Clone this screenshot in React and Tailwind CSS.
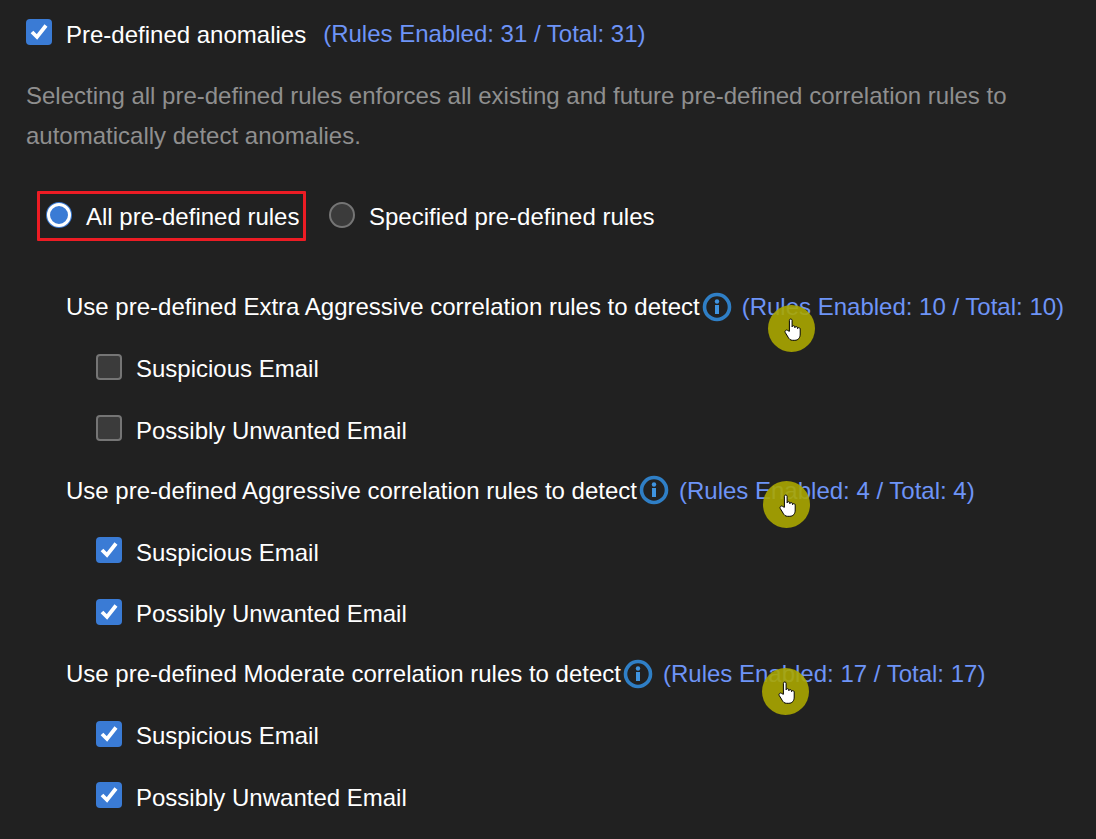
const Check = ({ checked }) => (
  <span
    className={`mb-[5px] flex h-[26px] w-[26px] shrink-0 items-center justify-center rounded-[4px] ${
      checked ? "bg-[#3a7bd5]" : "border-[2px] border-[#757575] bg-[#3b3b3b]"
    }`}
  >
    {checked && (
      <svg width="20" height="20" viewBox="0 0 20 20">
        <path d="M3 10 L8 15 L17 3.5" fill="none" stroke="#fff" strokeWidth="3.8" />
      </svg>
    )}
  </span>
);

const InfoIcon = () => (
  <svg width="30" height="30" viewBox="0 0 30 30" className="shrink-0">
    <circle cx="15" cy="15" r="12.5" fill="none" stroke="#2f7fc6" strokeWidth="3.6" />
    <circle cx="15" cy="9.5" r="2.2" fill="#3f94e0" />
    <rect x="13" y="13" width="4" height="9" fill="#3f94e0" />
  </svg>
);

const Hand = () => (
  <svg width="18" height="25" viewBox="0 0 20 26" className="ml-[2px] mt-[1px]">
    <path
      d="M6 15 V2.8 C6 0.8 9 0.8 9 2.8 V10 C9 8.4 12 8.4 12 10 V11 C12 9.4 15 9.4 15 11 V12 C15 10.6 18 10.6 18 12.5 V18 C18 22 16 25 12 25 H9.5 C7 25 5.8 23.6 4.6 21.6 L1.4 16.4 C0.3 14.4 2.8 12.6 4.2 14.2 Z"
      fill="#fff"
      stroke="#000"
      strokeWidth="1.1"
    />
  </svg>
);

const Cursor = ({ className }) => (
  <div className={`absolute flex h-[47px] w-[47px] items-center justify-center rounded-full bg-[#aaa600]/90 ${className}`}>
    <Hand />
  </div>
);

const Item = ({ label, checked, height }) => (
  <div className={`flex items-center gap-[14px] pl-[96px] ${height}`}>
    <Check checked={checked} />
    <span>{label}</span>
  </div>
);

const Group = ({ title, count, checked }) => (
  <div className="-mb-[0.5px]">
    <div className="mb-[1px] flex h-[60px] items-center pl-[66px]">
      <span>{title}</span>
      <span className="ml-[2px] mb-[1px]"><InfoIcon /></span>
      <span className="ml-[10px] text-[#6e94f7]">{count}</span>
    </div>
    <Item label="Suspicious Email" checked={checked} height="h-[62px]" />
    <Item label="Possibly Unwanted Email" checked={checked} height="h-[61px]" />
  </div>
);

export default function App() {
  return (
    <div className="relative h-[839px] w-[1096px] overflow-hidden bg-[#212121] font-['Liberation_Sans',Arial,sans-serif] text-[24px] text-white">
      <div className="flex h-[68px] items-center pl-[26px]">
        <Check checked />
        <span className="ml-[14px] mt-[2px]">Pre-defined anomalies</span>
        <span className="ml-[17px] text-[#6e94f7]">(Rules Enabled: 31 / Total: 31)</span>
      </div>
      <p className="mt-[8px] w-[1040px] pl-[26px] leading-[40px] text-[#8f8f8f]">
        Selecting all pre-defined rules enforces all existing and future pre-defined correlation rules to automatically detect anomalies.
      </p>
      <div className="mt-[35px] flex h-[50px] items-center pl-[37px]">
        <div className="flex h-[50px] w-[269px] items-center rounded-[1px] border-[3px] border-[#ed1c24] pl-[6px]">
          <span className="mb-[2px] flex h-[26px] w-[26px] shrink-0 items-center justify-center rounded-full bg-[#3a7bd5]">
            <span className="h-[24px] w-[24px] rounded-full border-[3px] border-white bg-[#3a7bd5]" />
          </span>
          <span className="ml-[14px] mt-[2px] whitespace-nowrap">All pre-defined rules</span>
        </div>
        <span className="mb-[2px] ml-[23px] h-[26px] w-[26px] shrink-0 rounded-full border-[2px] border-[#757575] bg-[#3b3b3b]" />
        <span className="ml-[14px] mt-[2px]">Specified pre-defined rules</span>
      </div>
      <div className="mt-[36px]">
        <Group title="Use pre-defined Extra Aggressive correlation rules to detect" count="(Rules Enabled: 10 / Total: 10)" checked={false} />
        <Group title="Use pre-defined Aggressive correlation rules to detect" count="(Rules Enabled: 4 / Total: 4)" checked />
        <Group title="Use pre-defined Moderate correlation rules to detect" count="(Rules Enabled: 17 / Total: 17)" checked />
      </div>
      <Cursor className="left-[768px] top-[305px]" />
      <Cursor className="left-[763px] top-[481px]" />
      <Cursor className="left-[762px] top-[668px]" />
    </div>
  );
}
